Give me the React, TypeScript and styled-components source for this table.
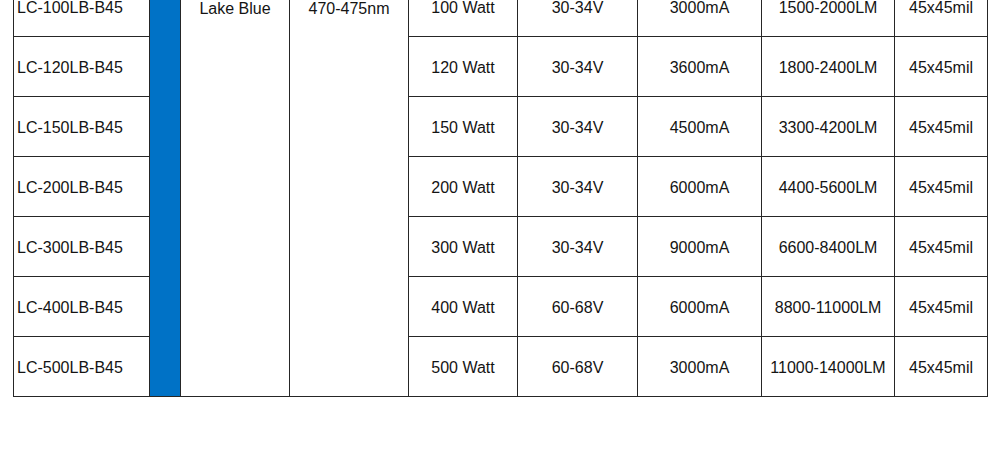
import React from "react";
import styled, { createGlobalStyle } from "styled-components";

const GlobalStyle = createGlobalStyle`
  html, body {
    margin: 0;
    padding: 0;
    background: #ffffff;
  }
`;

const Wrapper = styled.main`
  padding: 0 0 0 13px;
  margin-top: -24px;
  font-family: "Liberation Sans", Arial, sans-serif;
`;

const Table = styled.table`
  border-collapse: collapse;
  table-layout: fixed;
  width: 974px;
  color: #141414;
  font-size: 16px;
`;

const Cell = styled.td<{ $align?: "left" | "center" }>`
  height: 57px;
  padding: 2px 0 0 ${(p) => (p.$align === "left" ? "3px" : "0")};
  border: 1px solid #262626;
  text-align: ${(p) => p.$align ?? "center"};
  vertical-align: middle;
  white-space: nowrap;
  line-height: 18px;
`;

const MergedCell = styled.td`
  padding: 23px 0 0;
  border: 1px solid #262626;
  text-align: center;
  vertical-align: top;
  line-height: 18px;
`;

const ColorCell = styled.td<{ $color: string }>`
  padding: 0;
  border: 1px solid #262626;
  background: ${(p) => p.$color};
`;

const widths = [136, 31, 109, 119, 109, 120, 124, 133, 93];

const rows = [
  ["LC-100LB-B45", "100 Watt", "30-34V", "3000mA", "1500-2000LM", "45x45mil"],
  ["LC-120LB-B45", "120 Watt", "30-34V", "3600mA", "1800-2400LM", "45x45mil"],
  ["LC-150LB-B45", "150 Watt", "30-34V", "4500mA", "3300-4200LM", "45x45mil"],
  ["LC-200LB-B45", "200 Watt", "30-34V", "6000mA", "4400-5600LM", "45x45mil"],
  ["LC-300LB-B45", "300 Watt", "30-34V", "9000mA", "6600-8400LM", "45x45mil"],
  ["LC-400LB-B45", "400 Watt", "60-68V", "6000mA", "8800-11000LM", "45x45mil"],
  ["LC-500LB-B45", "500 Watt", "60-68V", "3000mA", "11000-14000LM", "45x45mil"],
];

export default function App() {
  return (
    <>
      <GlobalStyle />
      <Wrapper>
        <Table>
          <colgroup>
            {widths.map((w, i) => (
              <col key={i} style={{ width: w }} />
            ))}
          </colgroup>
          <tbody>
            {rows.map(([model, watt, volt, amp, lm, chip], i) => (
              <tr key={model}>
                <Cell $align="left">{model}</Cell>
                {i === 0 && (
                  <>
                    <ColorCell rowSpan={rows.length} $color="#0072c6" />
                    <MergedCell rowSpan={rows.length}>Lake Blue</MergedCell>
                    <MergedCell rowSpan={rows.length}>470-475nm</MergedCell>
                  </>
                )}
                <Cell>{watt}</Cell>
                <Cell>{volt}</Cell>
                <Cell>{amp}</Cell>
                <Cell>{lm}</Cell>
                <Cell>{chip}</Cell>
              </tr>
            ))}
          </tbody>
        </Table>
      </Wrapper>
    </>
  );
}
